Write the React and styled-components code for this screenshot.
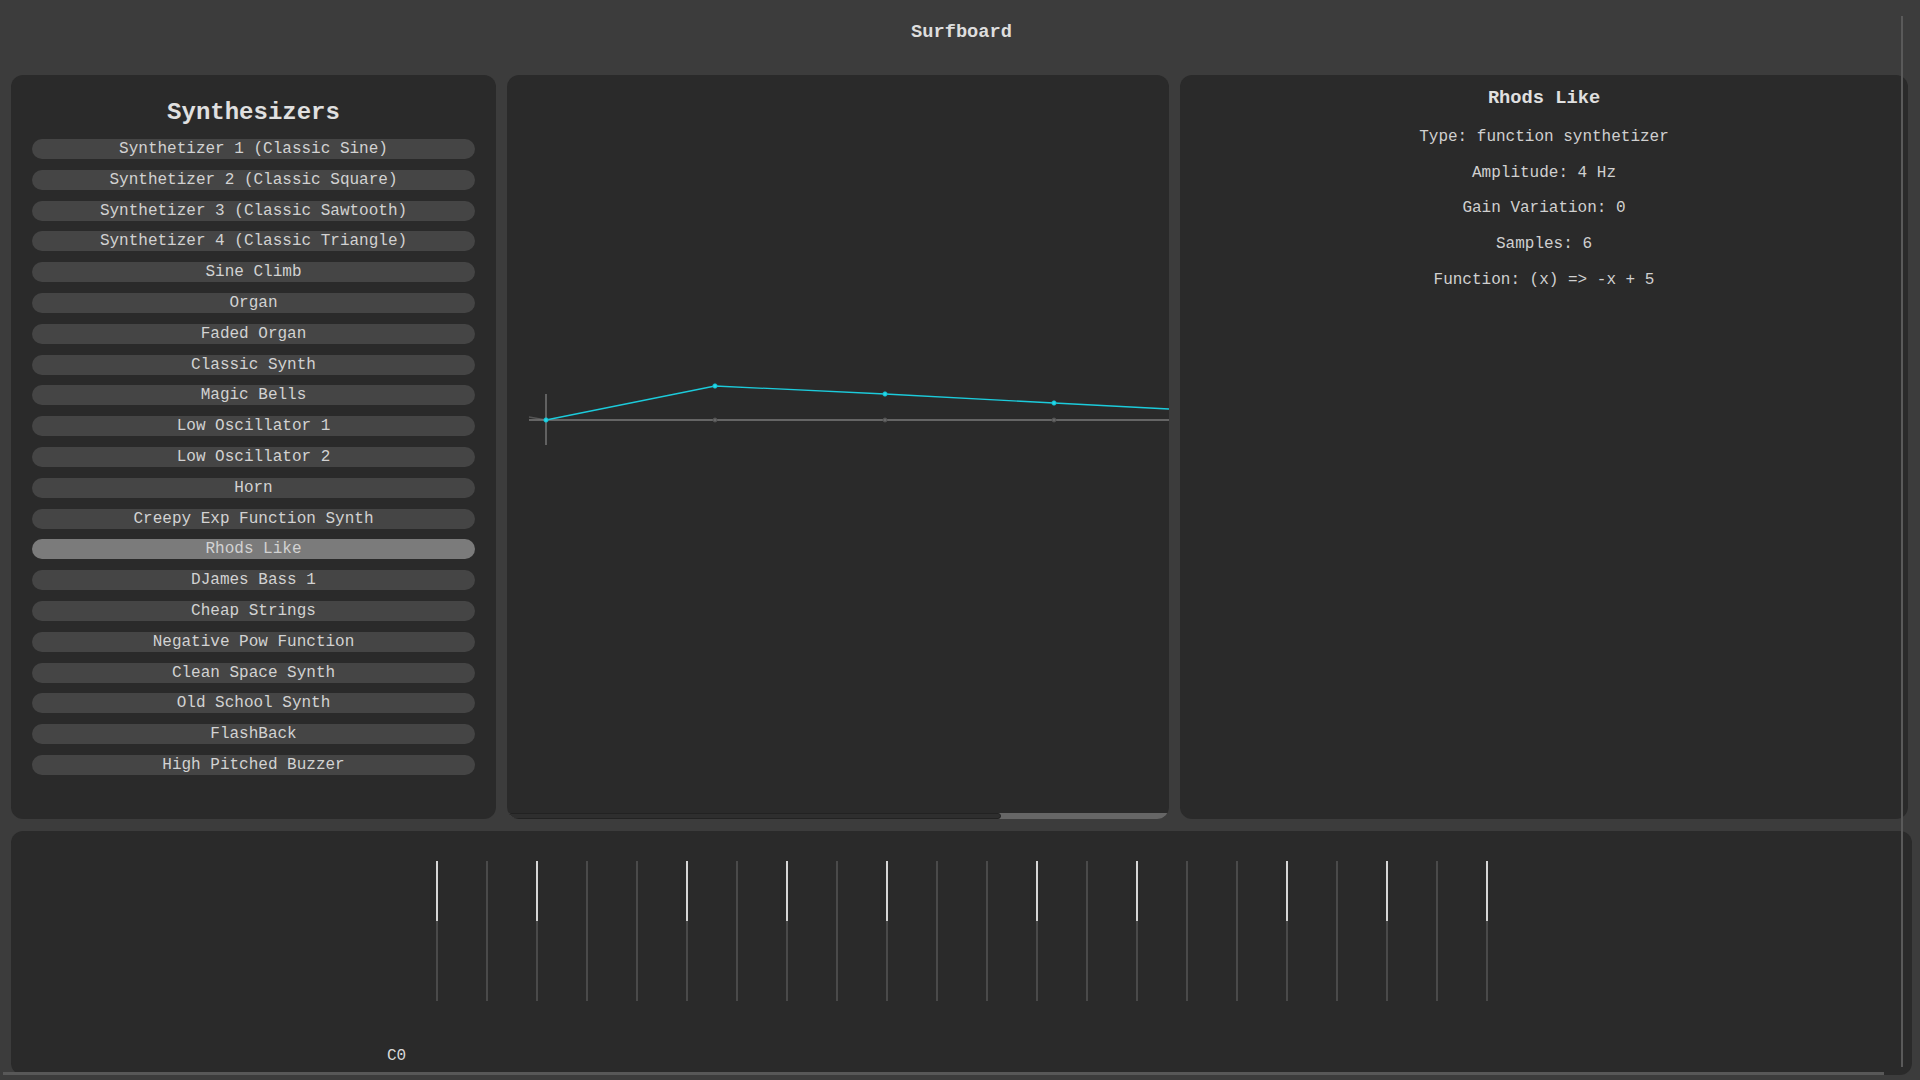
import React from "react";
import styled, { createGlobalStyle } from "styled-components";

const Global = createGlobalStyle`
  html, body { margin: 0; padding: 0; background: #3c3c3c; }
  body { font-family: "Liberation Mono", "DejaVu Sans Mono", monospace; color: #d4d4d4; }
  * { box-sizing: border-box; }
`;

const Page = styled.div`
  position: relative;
  width: 1920px;
  height: 1080px;
  overflow: hidden;
  padding: 0 8px 0 11px;
  display: flex;
  flex-direction: column;
`;

const Header = styled.header`
  height: 75px;
  display: flex;
  justify-content: center;
  padding-top: 21px;
  font-size: 18.72px;
  line-height: 22px;
  font-weight: bold;
  color: #dedede;
`;

const Main = styled.main`
  display: grid;
  grid-template-columns: 485px 662px 728px;
  column-gap: 11px;
  height: 744px;
`;

const Panel = styled.section`
  background: #2a2a2a;
  border-radius: 12px;
  overflow: hidden;
`;

const ListPanel = styled(Panel)`
  padding: 23px 21px 0;
  display: flex;
  flex-direction: column;
`;

const ListTitle = styled.h2`
  margin: 0 0 12px;
  font-size: 24px;
  line-height: 29px;
  font-weight: bold;
  text-align: center;
  color: #e0e0e0;
`;

const SynthList = styled.div`
  display: flex;
  flex-direction: column;
  gap: 10.8px;
`;

const SynthButton = styled.button`
  height: 20px;
  border: none;
  border-radius: 10px;
  padding: 0;
  background: ${(p) => (p.$active ? "#7b7b7b" : "#454545")};
  color: #d2d2d2;
  font-family: inherit;
  font-size: 16px;
  line-height: 21px;
  text-align: center;
  white-space: nowrap;
`;

const GraphPanel = styled(Panel)`
  display: flex;
  flex-direction: column;
`;

const GraphArea = styled.div`
  flex: 1;
`;

const ScrollTrack = styled.div`
  height: 11px;
  margin: 0 0 0 1px;
  background: #666666;
  border-radius: 6px;
  display: flex;
`;

const ScrollThumb = styled.div`
  width: 493px;
  height: 100%;
  background: #2e2e2e;
  border: 1px solid #222222;
  border-radius: 6px;
`;

const InfoPanel = styled(Panel)`
  padding-top: 12px;
  display: flex;
  flex-direction: column;
  align-items: center;
`;

const InfoTitle = styled.h3`
  margin: 0 0 18px;
  font-size: 18.72px;
  line-height: 22px;
  font-weight: bold;
  color: #e0e0e0;
`;

const InfoList = styled.div`
  display: flex;
  flex-direction: column;
  align-items: center;
  gap: 15.7px;
`;

const InfoLine = styled.p`
  margin: 0;
  font-size: 16px;
  line-height: 20px;
  color: #d0d0d0;
`;

const KeyboardPanel = styled(Panel)`
  margin-top: 12px;
  width: 1901px;
  height: 244px;
  padding-top: 30px;
  display: flex;
  flex-direction: column;
`;

const Keys = styled.div`
  display: flex;
  gap: 48px;
  padding-left: 425px;
  height: 140px;
`;

const KeyLine = styled.div`
  width: 2px;
  height: 140px;
  background: ${(p) =>
    p.$lit
      ? "linear-gradient(to bottom, #d6d6d6 0, #d6d6d6 60px, #4a4a4a 60px, #4a4a4a 100%)"
      : "#4a4a4a"};
`;

const NoteLabel = styled.div`
  margin-top: 45px;
  padding-left: 376px;
  font-size: 16px;
  line-height: 20px;
  color: #d8d8d8;
`;

const VScroll = styled.div`
  position: absolute;
  left: 1901px;
  top: 16px;
  width: 2px;
  height: 1051px;
  background: #5a5a5a;
`;

const HScroll = styled.div`
  position: absolute;
  left: 3px;
  top: 1072px;
  width: 1881px;
  height: 3px;
  background: #585858;
`;

const synths = [
  "Synthetizer 1 (Classic Sine)",
  "Synthetizer 2 (Classic Square)",
  "Synthetizer 3 (Classic Sawtooth)",
  "Synthetizer 4 (Classic Triangle)",
  "Sine Climb",
  "Organ",
  "Faded Organ",
  "Classic Synth",
  "Magic Bells",
  "Low Oscillator 1",
  "Low Oscillator 2",
  "Horn",
  "Creepy Exp Function Synth",
  "Rhods Like",
  "DJames Bass 1",
  "Cheap Strings",
  "Negative Pow Function",
  "Clean Space Synth",
  "Old School Synth",
  "FlashBack",
  "High Pitched Buzzer",
];

const litKeys = new Set([0, 2, 5, 7, 9, 12, 14, 17, 19, 21]);

function Graph() {
  const pts = [
    [39, 345],
    [208, 311],
    [378, 319],
    [547, 328],
  ];
  return (
    <svg width="662" height="733" viewBox="0 0 662 733">
      <line x1="22" y1="342" x2="39" y2="345" stroke="#555" strokeWidth="1.5" />
      <line x1="22" y1="345" x2="662" y2="345" stroke="#7a7a7a" strokeWidth="1.6" />
      <line x1="39" y1="319" x2="39" y2="370" stroke="#7a7a7a" strokeWidth="1.4" />
      {[208, 378, 547].map((x) => (
        <circle key={x} cx={x} cy="345" r="2" fill="#666" stroke="#505050" strokeWidth="1" />
      ))}
      <polyline
        points="39,345 208,311 378,319 547,328 662,334"
        fill="none"
        stroke="#1ccbdb"
        strokeWidth="1.3"
      />
      {pts.map(([x, y]) => (
        <circle key={x} cx={x} cy={y} r="2.2" fill="#22d8ea" stroke="#0fb6c6" strokeWidth="0.8" />
      ))}
    </svg>
  );
}

export default function App() {
  return (
    <>
      <Global />
      <Page>
        <Header>Surfboard</Header>
        <Main>
          <ListPanel>
            <ListTitle>Synthesizers</ListTitle>
            <SynthList>
              {synths.map((s) => (
                <SynthButton key={s} $active={s === "Rhods Like"}>
                  {s}
                </SynthButton>
              ))}
            </SynthList>
          </ListPanel>
          <GraphPanel>
            <GraphArea>
              <Graph />
            </GraphArea>
            <ScrollTrack>
              <ScrollThumb />
            </ScrollTrack>
          </GraphPanel>
          <InfoPanel>
            <InfoTitle>Rhods Like</InfoTitle>
            <InfoList>
              <InfoLine>Type: function synthetizer</InfoLine>
              <InfoLine>Amplitude: 4 Hz</InfoLine>
              <InfoLine>Gain Variation: 0</InfoLine>
              <InfoLine>Samples: 6</InfoLine>
              <InfoLine>Function: (x) =&gt; -x + 5</InfoLine>
            </InfoList>
          </InfoPanel>
        </Main>
        <KeyboardPanel>
          <Keys>
            {Array.from({ length: 22 }, (_, i) => (
              <KeyLine key={i} $lit={litKeys.has(i)} />
            ))}
          </Keys>
          <NoteLabel>C0</NoteLabel>
        </KeyboardPanel>
        <VScroll />
        <HScroll />
      </Page>
    </>
  );
}
